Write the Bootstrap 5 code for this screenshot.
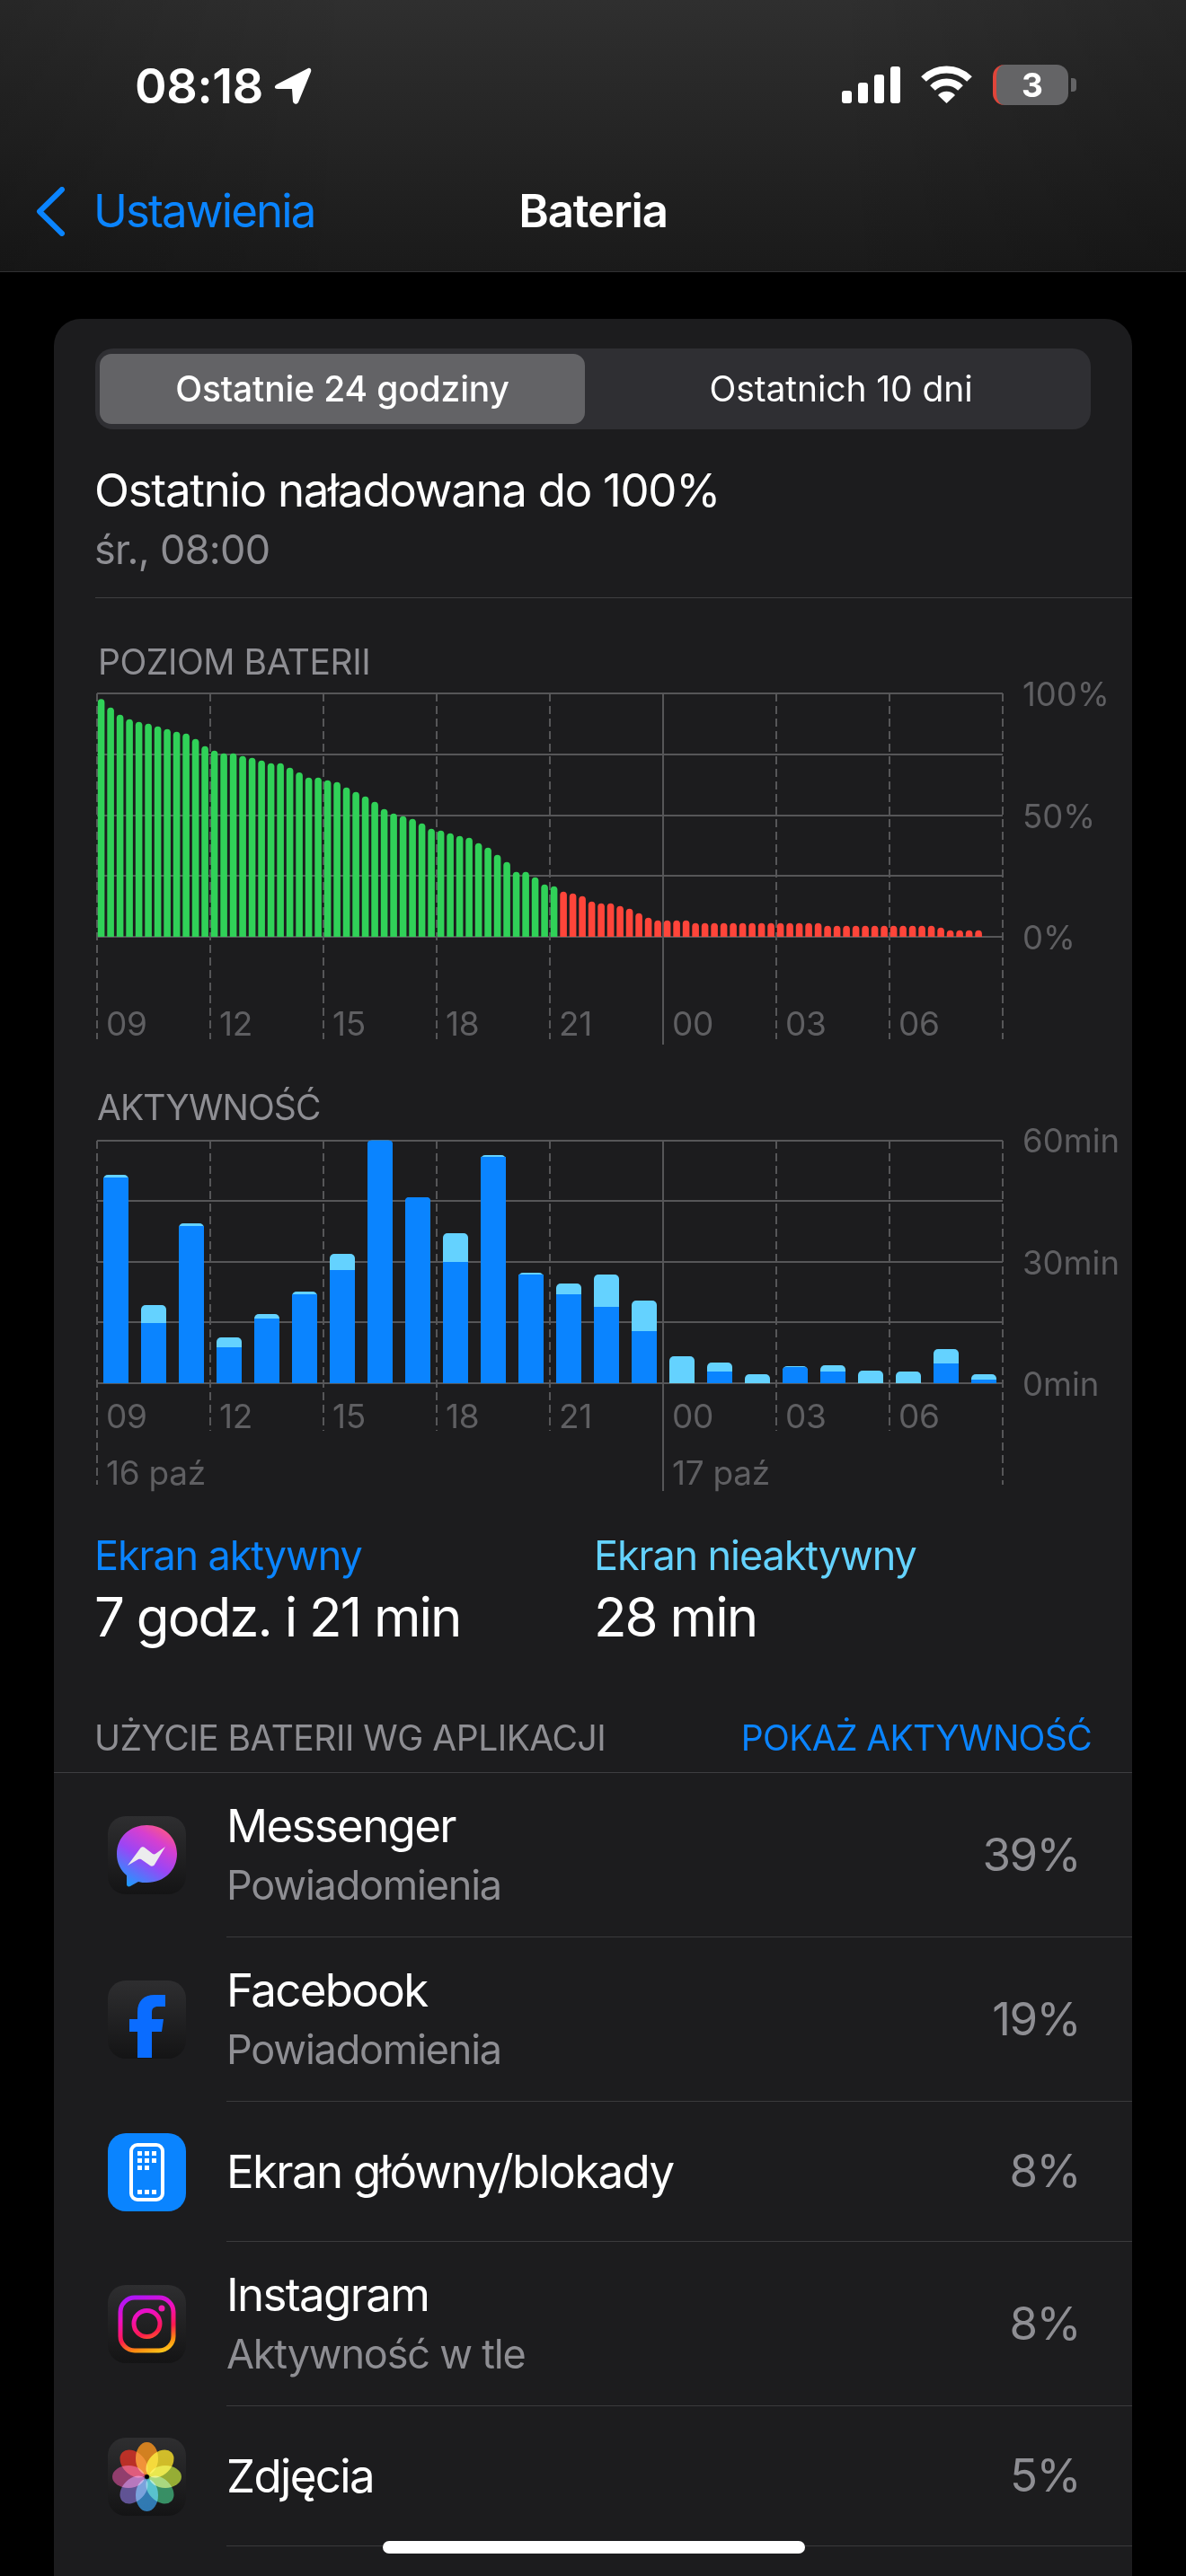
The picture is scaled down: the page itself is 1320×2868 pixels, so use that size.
<!DOCTYPE html>
<html lang="pl">
<head>
<meta charset="UTF-8">
<meta name="viewport" content="width=device-width, initial-scale=1.0">
<title>Bateria</title>
<link href="https://cdn.jsdelivr.net/npm/bootstrap@5.3.0/dist/css/bootstrap.min.css" rel="stylesheet">
<style>
body { background: #000; color: #fff; font-family: Inter, "Noto Sans", sans-serif; margin: 0; }
.screen { width: 1320px; height: 2868px; overflow: hidden; }

/* Gorny pasek */
.top-bar { height: 303px; background: linear-gradient(90deg, rgba(0,0,0,.18), rgba(0,0,0,0) 30%, rgba(0,0,0,0) 70%, rgba(0,0,0,.18)), linear-gradient(#2f2f2f, #1a1a1a); border-bottom: 1px solid #303032; }
.status-row { height: 190px; padding: 0 122px 2px 150px; }
.clock-group { gap: 12px; margin-top: 3px; }
.clock { font-size: 54px; font-weight: 600; letter-spacing: -.4px; line-height: 60px; }
.status-icons { gap: 23px; }
.batt-body { width: 84px; height: 45px; border-radius: 13px; background: #646466; border-left: 4px solid #e0453a; font-size: 37px; font-weight: 700; line-height: 45px; text-align: center; }
.batt-cap { width: 6px; height: 15px; background: #646466; border-radius: 0 4px 4px 0; margin-left: 3px; }
.nav-row { height: 88px; display: grid; grid-template-columns: 1fr auto 1fr; padding: 2px 40px 0; }
.nav-back { color: #0a84ff; font-size: 51px; letter-spacing: -1.9px; gap: 31px; }
.nav-title { font-size: 51px; font-weight: 600; letter-spacing: -1.2px; }

/* Karta */
.page-body { padding: 52px 60px 0; }
.bat-card { background: #1c1c1e; border-radius: 30px 30px 0 0; padding-top: 33px; height: 2513px; }
.segment { margin: 0 46px; height: 90px; padding: 6px 5px; background: #2f2f33; border-radius: 20px; font-size: 39px; }
.seg-on { width: 540px; padding-top: 1px; background: #636366; border-radius: 13px; font-weight: 500; letter-spacing: -.15px; }
.seg-off { padding: 1px 0 0 12px; letter-spacing: -.1px; font-weight: 400; }
.headline { margin: 40px 0 0 45px; font-size: 51px; line-height: 56px; letter-spacing: -1.3px; }
.sub-line { margin: 13px 0 0 45px; font-size: 45px; line-height: 50px; letter-spacing: -.7px; color: #8e8e93; }
.hair { height: 1px; background: #3e3e41; margin: 28px 0 0 46px; }
.cap-label { margin: 49px 0 0 49px; font-size: 39px; line-height: 44px; letter-spacing: -.45px; color: #8e8e93; }
.cap-label.second { margin: 48px 0 0 48px; padding-bottom: 2px; letter-spacing: -.9px; }

/* Wykresy */
.plot-row { margin: 12px 0 0 47px; }
.plot { width: 1010px; }
.plot svg { display: block; }
.x-axis { left: 1px; }
.x-axis span { width: 126px; padding-left: 10px; font-size: 37px; line-height: 44px; letter-spacing: -.3px; color: #5f5f62; }
.y-axis { margin-left: 21px; font-size: 36.500px; line-height: 44px; color: #5f5f62; }

/* Podsumowanie */
.stats { margin: 47px 0 0 45px; }
.stat-col { width: 556px; }
.stat-label { font-size: 45px; line-height: 50px; letter-spacing: -1.1px; }
.stat-value { margin-top: 11px; font-size: 60px; line-height: 64px; letter-spacing: -2px; }
.c-blue { color: #0a84ff; }
.c-sky { color: #64d2ff; }
.section-row { margin-top: 81px; padding: 0 45px 16px; border-bottom: 1px solid #3e3e41; font-size: 39px; line-height: 44px; }
.section-name { color: #8e8e93; letter-spacing: -.5px; }
.section-link { color: #0a84ff; letter-spacing: -.65px; }

/* Lista aplikacji */
.app-row { height: 183px; }
.app-row.short { height: 156px; }
.app-icon-cell { width: 192px; padding-left: 60px; flex: none; }
.app-icon { width: 87px; height: 87px; border-radius: 20px; background: linear-gradient(#2e2e30, #141415); }
.app-icon.blue { background: #0a84ff; }
.app-main { padding: 0 58px 0 0; border-bottom: 1px solid #3a3a3c; }
.app-name { font-size: 51px; line-height: 62px; letter-spacing: -1.65px; }
.app-detail { margin-top: 5px; font-size: 45px; line-height: 60px; letter-spacing: -1.2px; color: #8e8e93; }
.app-pct { font-size: 51px; letter-spacing: -1.6px; color: #8e8e93; }
.home-bar { width: 470px; height: 14px; bottom: 25px; left: 426px; background: #fff; border-radius: 7px; }
</style>
</head>
<body>
<div class="screen d-flex flex-column position-relative">

  <header class="top-bar">
    <div class="status-row d-flex align-items-center justify-content-between">
      <div class="clock-group d-flex align-items-center">
        <span class="clock">08:18</span>
        <svg width="42" height="41" viewBox="0 0 42 41"><path fill="#fff" d="M38 1 3 19c-3 2-3 5 1 5h16l1 14c1 3 4 4 6 1L41 5c1-3-1-5-3-4z"/></svg>
      </div>
      <div class="status-icons d-flex align-items-center">
        <svg width="65" height="41" viewBox="0 0 65 41" fill="#fff">
          <rect x="0" y="27" width="11" height="14" rx="3"/>
          <rect x="18" y="18" width="11" height="23" rx="3"/>
          <rect x="36" y="9" width="11" height="32" rx="3"/>
          <rect x="54" y="0" width="11" height="41" rx="3"/>
        </svg>
        <svg width="57" height="42" viewBox="0 0 57 42">
          <g fill="none" stroke="#fff" stroke-width="8">
            <path d="M3 15a36 36 0 0 1 51 0"/>
            <path d="M13 25a22 22 0 0 1 31 0"/>
          </g>
          <path fill="#fff" d="M19 33a13 13 0 0 1 19 0l-9.500 9z"/>
        </svg>
        <div class="d-flex align-items-center">
          <div class="batt-body">3</div>
          <div class="batt-cap"></div>
        </div>
      </div>
    </div>
    <div class="nav-row align-items-center">
      <div class="nav-back d-flex align-items-center">
        <svg width="33" height="55" viewBox="0 0 33 55"><path fill="none" stroke="#0a84ff" stroke-width="6" stroke-linecap="round" stroke-linejoin="round" d="M29 3 4 27.500 29 52"/></svg>
        <span>Ustawienia</span>
      </div>
      <div class="nav-title">Bateria</div>
    </div>
  </header>

  <main class="page-body">
    <section class="bat-card position-relative">
      <div class="segment d-flex">
        <div class="seg-on d-flex align-items-center justify-content-center">Ostatnie 24 godziny</div>
        <div class="seg-off flex-grow-1 d-flex align-items-center justify-content-center">Ostatnich 10 dni</div>
      </div>

      <div class="headline">Ostatnio naładowana do 100%</div>
      <div class="sub-line">śr., 08:00</div>
      <div class="hair"></div>

      <div class="cap-label">POZIOM BATERII</div>
      <div class="plot-row d-flex">
        <div class="plot position-relative">
          <svg id="levelChart" width="1010" height="392"></svg>
          <div class="x-axis d-flex position-absolute" style="top:347px">
            <span>09</span><span>12</span><span>15</span><span>18</span><span>21</span><span>00</span><span>03</span><span>06</span>
          </div>
        </div>
        <div class="y-axis d-flex flex-column justify-content-between" style="margin-top:-20px;height:315px">
          <span>100%</span><span>50%</span><span>0%</span>
        </div>
      </div>

      <div class="cap-label second">AKTYWNOŚĆ</div>
      <div class="plot-row d-flex">
        <div class="plot position-relative">
          <svg id="activityChart" width="1010" height="391"></svg>
          <div class="x-axis d-flex position-absolute" style="top:286px">
            <span>09</span><span>12</span><span>15</span><span>18</span><span>21</span><span>00</span><span>03</span><span>06</span>
          </div>
          <div class="x-axis d-flex position-absolute" style="top:349px">
            <span class="text-nowrap">16 paź</span><span></span><span></span><span></span><span></span><span class="text-nowrap">17 paź</span>
          </div>
        </div>
        <div class="y-axis d-flex flex-column justify-content-between" style="margin-top:-21px;height:315px">
          <span>60min</span><span>30min</span><span>0min</span>
        </div>
      </div>

      <div class="stats d-flex">
        <div class="stat-col">
          <div class="stat-label c-blue">Ekran aktywny</div>
          <div class="stat-value">7 godz. i 21 min</div>
        </div>
        <div>
          <div class="stat-label c-sky">Ekran nieaktywny</div>
          <div class="stat-value">28 min</div>
        </div>
      </div>

      <div class="section-row d-flex justify-content-between">
        <span class="section-name">UŻYCIE BATERII WG APLIKACJI</span>
        <span class="section-link">POKAŻ AKTYWNOŚĆ</span>
      </div>

      <ul class="list-unstyled m-0">
        <li class="app-row d-flex">
          <div class="app-icon-cell d-flex align-items-center">
            <div class="app-icon">
              <svg width="87" height="87" viewBox="0 0 87 87">
                <defs><linearGradient id="msgGrad" x1=".2" y1="1" x2=".8" y2="0">
                  <stop offset="0" stop-color="#1c9bff"/><stop offset=".45" stop-color="#9b45f5"/><stop offset=".75" stop-color="#d63fd0"/><stop offset="1" stop-color="#ff5a7e"/>
                </linearGradient></defs>
                <path fill="url(#msgGrad)" d="M43.500 10C24 10 10 24 10 42c0 10 4 18 11 24v10c0 2 2 3 4 2l9-5c3 1 6 1 9.500 1C63 74 77 60 77 42S63 10 43.500 10z"/>
                <path fill="#ececee" d="M22 55 36 36c1-2 4-2 5-1l9 7c1 .5 2 .5 3 0l11-8-12 20c-1 2-4 2-5 1l-10-7c-1-.5-2-.5-3 0z"/>
              </svg>
            </div>
          </div>
          <div class="app-main flex-grow-1 d-flex align-items-center justify-content-between">
            <div><div class="app-name">Messenger</div><div class="app-detail">Powiadomienia</div></div>
            <div class="app-pct">39%</div>
          </div>
        </li>
        <li class="app-row d-flex">
          <div class="app-icon-cell d-flex align-items-center">
            <div class="app-icon">
              <svg width="87" height="87" viewBox="0 0 87 87"><path fill="#0a6cff" d="M33 86V57H24V43H33V35C33 23 40 16 52 16H64V29H56C51 29 49 31 49 36V43H62L60 57H49V86Z"/></svg>
            </div>
          </div>
          <div class="app-main flex-grow-1 d-flex align-items-center justify-content-between">
            <div><div class="app-name">Facebook</div><div class="app-detail">Powiadomienia</div></div>
            <div class="app-pct">19%</div>
          </div>
        </li>
        <li class="app-row short d-flex">
          <div class="app-icon-cell d-flex align-items-center">
            <div class="app-icon blue">
              <svg width="87" height="87" viewBox="0 0 87 87">
                <rect x="26" y="13" width="35" height="61" rx="7" fill="none" stroke="#fff" stroke-width="4"/>
                <g fill="#fff">
                  <rect x="33" y="20" width="5" height="5"/><rect x="41" y="20" width="5" height="5"/><rect x="49" y="20" width="5" height="5"/>
                  <rect x="33" y="28" width="5" height="5"/><rect x="41" y="28" width="5" height="5"/><rect x="49" y="28" width="5" height="5"/>
                  <rect x="33" y="36" width="5" height="5"/><rect x="41" y="36" width="5" height="5"/>
                  <rect x="33" y="63" width="5" height="5"/><rect x="41" y="63" width="5" height="5"/><rect x="49" y="63" width="5" height="5"/>
                </g>
              </svg>
            </div>
          </div>
          <div class="app-main flex-grow-1 d-flex align-items-center justify-content-between">
            <div class="app-name">Ekran główny/blokady</div>
            <div class="app-pct">8%</div>
          </div>
        </li>
        <li class="app-row d-flex">
          <div class="app-icon-cell d-flex align-items-center">
            <div class="app-icon">
              <svg width="87" height="87" viewBox="0 0 87 87">
                <defs><linearGradient id="igGrad" gradientUnits="userSpaceOnUse" x1="28" y1="10" x2="50" y2="78">
                  <stop offset="0" stop-color="#a516ff"/><stop offset=".35" stop-color="#f00fc0"/><stop offset=".65" stop-color="#ff1a4e"/><stop offset=".85" stop-color="#ff8a10"/><stop offset="1" stop-color="#ffc61a"/>
                </linearGradient></defs>
                <rect x="14" y="14" width="59" height="59" rx="16" fill="none" stroke="url(#igGrad)" stroke-width="5"/>
                <circle cx="43.500" cy="43" r="14.500" fill="none" stroke="url(#igGrad)" stroke-width="5"/>
                <circle cx="60" cy="26" r="3.500" fill="#f01bb0"/>
              </svg>
            </div>
          </div>
          <div class="app-main flex-grow-1 d-flex align-items-center justify-content-between">
            <div><div class="app-name">Instagram</div><div class="app-detail">Aktywność w tle</div></div>
            <div class="app-pct">8%</div>
          </div>
        </li>
        <li class="app-row short d-flex">
          <div class="app-icon-cell d-flex align-items-center">
            <div class="app-icon">
              <svg width="87" height="87" viewBox="0 0 87 87">
                <g id="petals" style="isolation:isolate"></g>
                <circle cx="43.500" cy="43.500" r="2" fill="#000"/>
              </svg>
            </div>
          </div>
          <div class="app-main flex-grow-1 d-flex align-items-center justify-content-between">
            <div class="app-name">Zdjęcia</div>
            <div class="app-pct">5%</div>
          </div>
        </li>
      </ul>
    </section>
  </main>

  <div class="home-bar position-absolute"></div>
</div>

<script>
// Odczytane z wykresu: gorna krawedz slupkow, skala 3x wzgledem linii bazowej
const levelTops = [234,262,286,301,310,316,325,334,343,349,367,391,406,415,415,424,430,439,448,448,463,479,496,496,505,511,529,544,559,577,601,616,625,634,649,667,673,682,691,697,715,730,754,778,811,811,829,853,859,
  877,883,892,910,916,916,925,934,949,964,973,973,973,973,
  982,982,982,982,982,982,982,982,982,982,982,982,982,982,
  991,991,991,991,991,991,991,991,991,991,991,991,997,1006,1006,1006,1006];
const GREEN_COUNT = 49;

// [gora calego slupka, gora czesci ciemnej]
const activity = [[384,393],[819,879],[546,555],[927,960],[849,864],[774,783],[648,702],[269,269],[459,459],[579,675],[318,324],[711,717],[747,783],[717,825],[804,906],[990,1080],[1011,1041],[1050,1080],[1023,1026],[1020,1041],[1038,1080],[1041,1080],[966,1014],[1050,1068]];

function topBar(x, w, top, base, r, fill) {
  const rr = Math.min(r, (base - top));
  return `<path fill="${fill}" d="M${x} ${base}V${top + rr}A${rr} ${rr} 0 0 1 ${x + rr} ${top}H${x + w - rr}A${rr} ${rr} 0 0 1 ${x + w} ${top + rr}V${base}Z"/>`;
}

function gridLines(rows, dashEnd, edgeEnd, solidEnd) {
  let out = '';
  rows.forEach((y) => { out += `<line x1="1" x2="1009" y1="${y}" y2="${y}" stroke="#565658" stroke-width="2"/>`; });
  for (let i = 0; i <= 8; i++) {
    const x = 1 + i * 126;
    if (i === 5) {
      out += `<line x1="${x}" x2="${x}" y1="${rows[0]}" y2="${solidEnd}" stroke="#565658" stroke-width="2"/>`;
    } else {
      const end = (i === 0 || i === 8) ? edgeEnd : dashEnd;
      out += `<line x1="${x}" x2="${x}" y1="${rows[0]}" y2="${end}" stroke="#565658" stroke-width="2" stroke-dasharray="9 5"/>`;
    }
  }
  return out;
}

// Poziom baterii
let level = gridLines([1, 69, 137, 204, 272], 386, 386, 392);
levelTops.forEach((t, i) => {
  const h = (1028 - t) / 3;
  level += topBar(1.8 + i * 10.5, 7.6, 272 - h, 272, 3.8, i < GREEN_COUNT ? '#30d158' : '#ff453a');
});
document.getElementById('levelChart').innerHTML = level;

// Aktywnosc
let act = gridLines([1, 68, 136, 203, 271], 324, 384, 391);
activity.forEach(([all, dark], i) => {
  const x = 8 + i * 42;
  const hAll = (1080 - all) / 3;
  const hDark = (1080 - dark) / 3;
  act += topBar(x, 28, 271 - hAll, 271, 5, '#64d2ff');
  if (hDark > 0) {
    act += dark - all < 6
      ? topBar(x, 28, 271 - hDark, 271, 4, '#0a84ff')
      : `<rect x="${x}" y="${271 - hDark}" width="28" height="${hDark}" fill="#0a84ff"/>`;
  }
});
document.getElementById('activityChart').innerHTML = act;

// Kwiatek Zdjec
const petalColors = ['#e98c1f', '#e8d22a', '#a6c038', '#3c9f70', '#3487c7', '#6a5ba5', '#a24278', '#cf3227'];
document.getElementById('petals').innerHTML = petalColors.map((c, i) =>
  `<ellipse cx="43.500" cy="23" rx="12.500" ry="18" fill="${c}" fill-opacity=".88" style="mix-blend-mode:screen" transform="rotate(${i * 45} 43.500 43.500)"/>`
).join('');
</script>
<script src="https://cdn.jsdelivr.net/npm/bootstrap@5.3.0/dist/js/bootstrap.bundle.min.js"></script>
</body>
</html>
